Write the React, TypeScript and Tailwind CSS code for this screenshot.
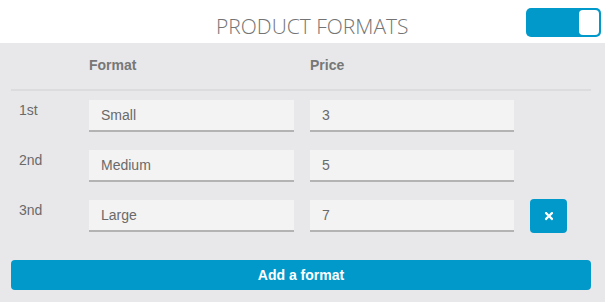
import React, { useState } from 'react';
import { FaTimes } from 'react-icons/fa';

interface Format {
  label: string;
  name: string;
  price: string;
}

const initialFormats: Format[] = [
  { label: '1st', name: 'Small', price: '3' },
  { label: '2nd', name: 'Medium', price: '5' },
  { label: '3nd', name: 'Large', price: '7' },
];

function Toggle({ on, onChange }: { on: boolean; onChange: (v: boolean) => void }) {
  return (
    <button
      onClick={() => onChange(!on)}
      className={`mt-[8px] mr-[4px] ml-auto flex h-[29px] w-[75px] items-center rounded-[5px] p-[2px] ${
        on ? 'justify-end bg-[#0199ca]' : 'justify-start bg-[#cfcfd2]'
      }`}
    >
      <span className="block h-[25px] w-[20px] rounded-[4px] bg-white" />
    </button>
  );
}

export default function App() {
  const [enabled, setEnabled] = useState(true);
  const [formats] = useState(initialFormats);

  return (
    <div className="w-[605px] h-[302px] bg-[#e8e8ea] font-['Liberation_Sans',Arial,sans-serif] text-[14px]">
      <header className="flex h-[43px] items-start bg-white">
        <h1 className="pl-[216px] pt-[12px] font-['Open_Sans',sans-serif] text-[21px] font-light leading-[28px] text-[#747474]">
          PRODUCT FORMATS
        </h1>
        <Toggle on={enabled} onChange={setEnabled} />
      </header>

      <div className="pl-[11px] pr-[14px]">
        <div className="grid grid-cols-[62px_205px_204px_37px] gap-x-[16px] h-[48px] border-b-2 border-[#dcdcdf] pt-[14px] font-bold leading-[16px] text-[#777]">
          <div />
          <div>Format</div>
          <div>Price</div>
          <div />
        </div>

        <div className="flex flex-col gap-[18px] pt-[9px]">
          {formats.map((f, i) => (
            <div key={f.label} className="grid grid-cols-[62px_205px_204px_37px] gap-x-[16px] h-[32px]">
              <div className="pl-[8px] pt-[2px] leading-[16px] text-[#6a6a6a]">{f.label}</div>
              <input
                defaultValue={f.name}
                className="h-[32px] w-full border-b-2 border-[#b3b3b3] bg-[#f3f3f3] px-[12px] text-[14px] text-[#6a6a6a] outline-none"
              />
              <input
                defaultValue={f.price}
                className="h-[32px] w-full border-b-2 border-[#b3b3b3] bg-[#f3f3f3] px-[12px] text-[14px] text-[#6a6a6a] outline-none"
              />
              {i === formats.length - 1 ? (
                <button className="-mt-[1px] flex h-[34px] w-[37px] items-center justify-center rounded-[4px] bg-[#0199ca] text-white">
                  <FaTimes size={12} />
                </button>
              ) : (
                <div />
              )}
            </div>
          ))}
        </div>

        <button className="mt-[28px] h-[30px] w-full rounded-[4px] bg-[#0199ca] text-[14px] font-bold text-white">
          Add a format
        </button>
      </div>
    </div>
  );
}
